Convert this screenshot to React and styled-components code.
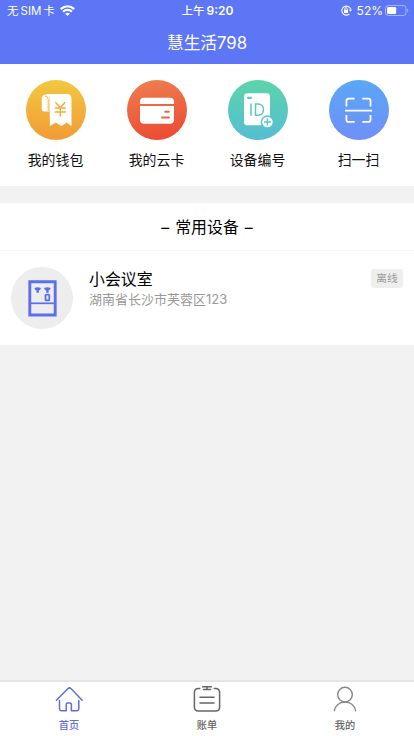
import React from "react";
import styled, { createGlobalStyle } from "styled-components";

const Global = createGlobalStyle`
  * { box-sizing: border-box; }
  body { margin: 0; background: #f2f2f2; font-family: Inter, "Noto Sans CJK SC", sans-serif; }
`;

const Screen = styled.div`
  display: flex;
  flex-direction: column;
  width: 414px;
  height: 736px;
  overflow: hidden;
  background: #f2f2f2;
`;

const Header = styled.header`
  height: 64px;
  background: #5c76f5;
  color: #fff;
`;

const StatusBar = styled.div`
  display: grid;
  grid-template-columns: 1fr auto 1fr;
  align-items: center;
  height: 21px;
  padding: 0 6px 0 7px;
  font-size: 11.5px;
  line-height: 20px;
  white-space: nowrap;
`;

const Carrier = styled.div`
  display: flex;
  align-items: center;
  gap: 2px;
  svg { margin-left: 3.5px; }
`;

const Clock = styled.div`
  display: flex;
  gap: 2px;
  font-weight: 500;
  font-size: 11.5px;
  b { font-weight: 600; font-size: 12px; }
`;

const Indicators = styled.div`
  display: flex;
  align-items: center;
  justify-content: flex-end;
  font-size: 12px;
  margin-right: -1px;
  svg:first-child { margin-right: 5px; }
  svg:last-child { margin-left: 2px; }
`;

const PageTitle = styled.h1`
  margin: 0;
  font-size: 16.7px;
  font-weight: 400;
  line-height: 44px;
  text-align: center;
`;

const Shortcuts = styled.nav`
  display: grid;
  grid-template-columns: repeat(4, 101px);
  justify-content: center;
  height: 122px;
  padding-top: 16px;
  background: #fff;
`;

const Shortcut = styled.div`
  display: flex;
  flex-direction: column;
  align-items: center;
  gap: 10px;
  font-size: 13.9px;
  line-height: 20px;
  color: #111;
`;

const Disc = styled.div`
  width: 60px;
  height: 60px;
  border-radius: 50%;
  background: linear-gradient(${(p) => p.$angle || "180deg"}, ${(p) => p.$from}, ${(p) => p.$to});
  svg { display: block; }
`;

const Devices = styled.section`
  height: 142px;
  margin-top: 17px;
  background: #fff;
`;

const SectionTitle = styled.h2`
  display: flex;
  justify-content: center;
  gap: 6px;
  margin: 0;
  height: 48px;
  border-bottom: 1px solid #f5f5f5;
  font-size: 15.9px;
  font-weight: 400;
  line-height: 49px;
  color: #000;
`;

const DeviceRow = styled.article`
  display: flex;
  align-items: flex-start;
  padding: 16px 11px 0;
`;

const Avatar = styled.div`
  width: 62px;
  height: 62px;
  border-radius: 50%;
  background: #ededed;
  svg { display: block; }
`;

const DeviceInfo = styled.div`
  flex: 1;
  margin-left: 16px;
`;

const DeviceName = styled.div`
  font-size: 15.9px;
  line-height: 25px;
  color: #000;
`;

const Address = styled.div`
  font-size: 13px;
  line-height: 15px;
  color: #999;
`;

const StateTag = styled.span`
  width: 32px;
  height: 19px;
  margin-top: 2px;
  border-radius: 3px;
  background: #eee;
  color: #999;
  font-size: 10.7px;
  line-height: 19px;
  text-align: center;
`;

const TabBar = styled.footer`
  display: grid;
  grid-template-columns: repeat(3, 1fr);
  height: 56px;
  margin-top: auto;
  border-top: 2px solid #e5e5e5;
  background: #fff;
`;

const Tab = styled.div`
  display: flex;
  flex-direction: column;
  align-items: center;
  padding-top: 3px;
  gap: 2px;
  color: ${(p) => (p.$active ? "#626ee0" : "#666")};
  font-size: 10.2px;
  font-weight: 500;
  line-height: 16px;
`;

const Wifi = () => (
  <svg width="15" height="11" viewBox="0 0 15 11" fill="none" stroke="#fff" strokeWidth="2.2">
    <path d="M.8 4.1C4.6.3 10.4.3 14.2 4.1M3.1 6.7c2.5-2.4 6.3-2.4 8.8 0" />
    <path d="M5.1 8.6c1.3-1.2 3.5-1.2 4.8 0L7.5 11z" fill="#fff" stroke="none" />
  </svg>
);

const RotationLock = () => (
  <svg width="11" height="11" viewBox="0 0 11 11" fill="none" stroke="#fff">
    <path d="M8.4 9A4.5 4.5 0 1 1 9.7 4.2" strokeWidth="1.1" />
    <path d="M7.9 4.5h3.1L9.5 6.8z" fill="#fff" stroke="none" />
    <rect x="3" y="4.8" width="4" height="3.1" rx=".5" fill="#fff" stroke="none" />
    <path d="M3.8 5V3.8a1.2 1.2 0 0 1 2.4 0V5" strokeWidth=".9" />
  </svg>
);

const Battery = () => (
  <svg width="24" height="11" viewBox="0 0 24 11">
    <rect x=".5" y=".5" width="20.5" height="10" rx="2.8" fill="none" stroke="#fff" strokeOpacity=".45" />
    <rect x="2" y="2" width="9.2" height="7" rx="1.3" fill="#fff" />
    <path d="M22.3 3.8c1.3.4 1.3 3 0 3.4z" fill="#fff" fillOpacity=".6" />
  </svg>
);

const WalletIcon = () => (
  <svg width="60" height="60" viewBox="0 0 60 60">
    <path d="M19.3 14H41Q45.5 14 45.5 18.5V46l-5-3.6-5 3.6-5.7-3.6-6 3.6V18.5Q23.8 15 19.3 14z" fill="#fff" />
    <path d="M20.3 14.5c-3.2 0-4.5 2-4.5 4.5v10c0 1.5.8 2.5 2.3 2.5h5.4V18.2c0-2.2-1-3.7-3.2-3.7z" fill="#fff" />
    <path d="M18.9 15.9q3.3.1 3.3 3.6v11.6" fill="none" stroke="#f3b43c" strokeWidth="1" />
    <path d="m29.4 22.2 4.9 5.4 4.9-5.4M34.3 27.6v9M28.7 28h11.2M28.7 32h11.2" fill="none" stroke="#f2af3a" strokeWidth="1.5" />
  </svg>
);

const CardIcon = () => (
  <svg width="60" height="60" viewBox="0 0 60 60">
    <path d="M17 17.7h26q4 0 4 4V24H13v-2.3q0-4 4-4zM13 26h34v13.7q0 4-4 4H17q-4 0-4-4z" fill="#fff" />
    <path d="M38.2 31.7h3.6M35 37.4h7" stroke="#ec6540" strokeWidth="2" strokeLinecap="round" />
  </svg>
);

const DeviceIdIcon = () => (
  <svg width="60" height="60" viewBox="0 0 60 60">
    <rect x="16" y="13.3" width="26" height="32" rx="3.4" fill="#fff" />
    <path d="M20 17.8h3" stroke="#5bcdb8" strokeWidth="2.2" strokeLinecap="round" />
    <path d="M23 23.4v12.4M27.5 24v11.2h2.6c7.2 0 7.2-11.2 0-11.2z" fill="none" stroke="#59c9bf" strokeWidth="1.5" />
    <circle cx="39.4" cy="42" r="6" fill="#fff" stroke="#58c6ca" strokeWidth="1.4" />
    <path d="M36 42h6.8M39.4 38.6v6.8" stroke="#58c6ca" strokeWidth="1.5" />
  </svg>
);

const ScanIcon = () => (
  <svg width="60" height="60" viewBox="0 0 60 60" fill="none" stroke="#fff" strokeWidth="1.8">
    <path d="M17.4 26.5v-5.7a2.2 2.2 0 0 1 2.2-2.2h6M33.3 18.6h6a2.2 2.2 0 0 1 2.2 2.2v5.7M17.4 35v4.7a2.2 2.2 0 0 0 2.2 2.2h6M33.3 41.9h6a2.2 2.2 0 0 0 2.2-2.2V35M16.1 30.6h27" />
  </svg>
);

const DispenserIcon = () => (
  <svg width="62" height="62" viewBox="0 0 62 62" fill="none" stroke="#5c70ed">
    <path d="M18.8 14.7h25.4V48H18.8z" strokeWidth="2.9" />
    <path d="M18.8 36.3h25.4" strokeWidth="1.7" />
    <path d="M23.5 20.9q3.2-1.3 6.4 0-.1 2.2-2 2.6v2.2h-2.4v-2.2q-1.9-.4-2-2.6zM33.2 20.9q3.2-1.3 6.4 0-.1 2.2-2 2.6v2.2h-2.4v-2.2q-1.9-.4-2-2.6z" fill="#5c70ed" stroke="none" />
    <rect x="34.5" y="27.6" width="3.8" height="5.8" rx=".7" strokeWidth="1.8" />
  </svg>
);

const HomeIcon = () => (
  <svg width="30" height="30" viewBox="0 0 30 30" fill="none" stroke="currentColor" strokeWidth="1.5" strokeLinecap="round" strokeLinejoin="round">
    <path d="M2.4 15.2 13.8 3.7q1.7-1.7 3.4 0l10.9 11.5M5.5 15.5v8.6q0 1.6 1.6 1.6h5.1v-6.4q0-1.4 1.4-1.4H16q1.4 0 1.4 1.4v6.4h5.8q1.6 0 1.6-1.6v-8.6" />
  </svg>
);

const BillIcon = () => (
  <svg width="30" height="30" viewBox="0 0 30 30" fill="none" stroke="currentColor" strokeWidth="1.5" strokeLinecap="round">
    <path d="M7.7 3.6H6.4q-4 0-4 4V22q0 4 4 4h17.2q4 0 4-4V7.6q0-4-4-4h-1.3M10.7 1.7h8.6M11.5 4.5h7M15 1.8v2.7M8 12.3h14M8 18.1h14" />
  </svg>
);

const ProfileIcon = () => (
  <svg width="30" height="30" viewBox="0 0 30 30" fill="none" stroke="#888" strokeWidth="1.4" strokeLinecap="round">
    <circle cx="15" cy="9.6" r="7.3" />
    <path d="M4.4 25.7C5.2 20.8 9.1 17 15 17s9.8 3.8 10.6 8.7" />
  </svg>
);

const shortcuts = [
  { label: "我的钱包", from: "#f1c83f", to: "#f29b37", Icon: WalletIcon },
  { label: "我的云卡", from: "#ee8050", to: "#ec472f", angle: "170deg", Icon: CardIcon },
  { label: "设备编号", from: "#5dd4a9", to: "#55bdd4", Icon: DeviceIdIcon },
  { label: "扫一扫", from: "#5aa7f7", to: "#708ff7", Icon: ScanIcon },
];

const tabs = [
  { label: "首页", active: true, Icon: HomeIcon },
  { label: "账单", Icon: BillIcon },
  { label: "我的", Icon: ProfileIcon },
];

export default function App() {
  return (
    <Screen>
      <Global />
      <Header>
        <StatusBar>
          <Carrier><span>无</span><span>SIM</span><span>卡</span><Wifi /></Carrier>
          <Clock><span>上午</span><b>9:20</b></Clock>
          <Indicators><RotationLock /><span>52%</span><Battery /></Indicators>
        </StatusBar>
        <PageTitle>慧生活798</PageTitle>
      </Header>
      <Shortcuts>
        {shortcuts.map(({ label, from, to, angle, Icon }) => (
          <Shortcut key={label}>
            <Disc $from={from} $to={to} $angle={angle}><Icon /></Disc>
            <span>{label}</span>
          </Shortcut>
        ))}
      </Shortcuts>
      <Devices>
        <SectionTitle><span>–</span><span>常用设备</span><span>–</span></SectionTitle>
        <DeviceRow>
          <Avatar><DispenserIcon /></Avatar>
          <DeviceInfo>
            <DeviceName>小会议室</DeviceName>
            <Address>湖南省长沙市芙蓉区123</Address>
          </DeviceInfo>
          <StateTag>离线</StateTag>
        </DeviceRow>
      </Devices>
      <TabBar>
        {tabs.map(({ label, active, Icon }) => (
          <Tab key={label} $active={active}><Icon /><span>{label}</span></Tab>
        ))}
      </TabBar>
    </Screen>
  );
}
